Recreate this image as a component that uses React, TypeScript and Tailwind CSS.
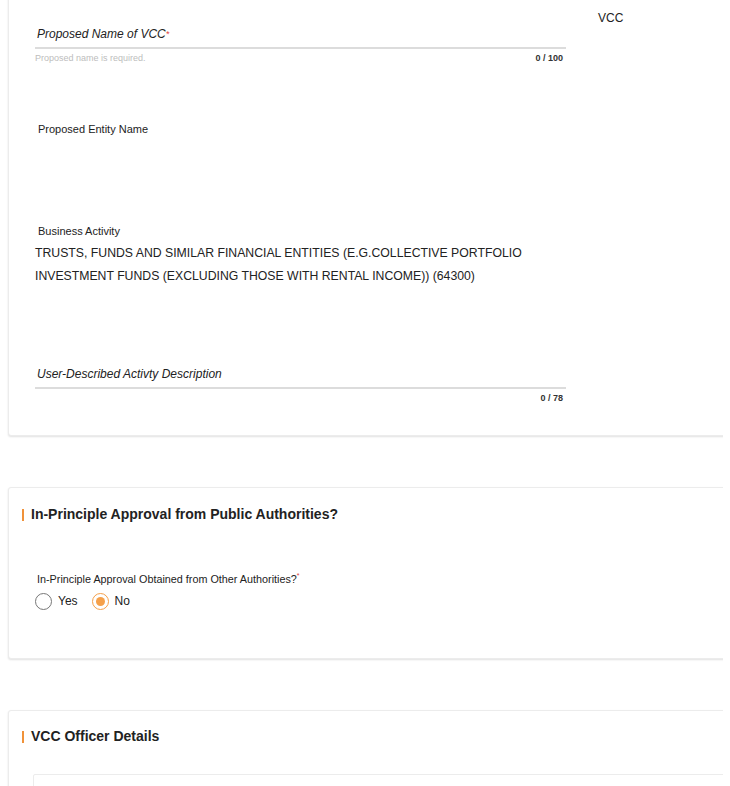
import React, { useState } from 'react';

const Card: React.FC<{ className?: string; children: React.ReactNode }> = ({ className = '', children }) => (
    <div className={`w-[740px] bg-white border border-[#ececec] rounded-[3px] shadow-[0_1px_2px_rgba(0,0,0,0.12)] ${className}`}>
        {children}
    </div>
);

const SectionTitle: React.FC<{ title: string }> = ({ title }) => (
    <div className="flex items-center gap-[7px] pl-[13px]">
        <span className="w-[2px] h-[12px] bg-[#f0923a]" />
        <h2 className="text-[14px] font-bold text-[#222]">{title}</h2>
    </div>
);

const UnderlineField: React.FC<{ label: string; required?: boolean; hint?: string; count: string }> = ({ label, required, hint, count }) => (
    <div className="w-[531px]">
        <div className="pl-[2px] text-[12px] italic text-[#222] leading-[14px]">
            {label}
            {required && <span className="text-[#e03a3a] text-[9px] align-top">*</span>}
        </div>
        <div className="mt-[6px] h-[2px] bg-[#dcdcdc]" />
        <div className="flex justify-between mt-[4px] text-[9px] leading-[11px]">
            <span className="text-[#bdbdbd]">{hint}</span>
            <span className="font-bold text-[#333] pr-[3px]">{count}</span>
        </div>
    </div>
);

const Radio: React.FC<{ checked: boolean; label: string; onClick: () => void }> = ({ checked, label, onClick }) => (
    <button onClick={onClick} className="flex items-center gap-[6px] text-[12px] text-[#222]">
        <span className={`w-[17px] h-[17px] rounded-full border-[1.5px] flex items-center justify-center ${checked ? 'border-[#f5a04a]' : 'border-[#777]'}`}>
            {checked && <span className="w-[9px] h-[9px] rounded-full bg-[#f5a04a]" />}
        </span>
        {label}
    </button>
);

export default function App() {
    const [approval, setApproval] = useState<'yes' | 'no'>('no');

    return (
        <div className="w-[723px] h-[786px] overflow-hidden bg-white font-['Liberation_Sans',Arial,sans-serif] text-[#222]">
            <div className="pl-[8px]">
                {/* Company details (top cut off) */}
                <Card className="-mt-[10px] pt-[36px] pb-[31px] pl-[26px]">
                    <div className="flex">
                        <div className="flex flex-col">
                            <UnderlineField label="Proposed Name of VCC" required hint="Proposed name is required." count="0 / 100" />

                            <div className="mt-[57px] pl-[3px] text-[11px]">Proposed Entity Name</div>

                            <div className="mt-[85px] pl-[3px] text-[11px]">Business Activity</div>
                            <p className="mt-[3px] text-[12.25px] leading-[23px] w-[531px]">
                                TRUSTS, FUNDS AND SIMILAR FINANCIAL ENTITIES (E.G.COLLECTIVE PORTFOLIO INVESTMENT FUNDS (EXCLUDING THOSE WITH RENTAL INCOME)) (64300)
                            </p>

                            <div className="mt-[79px]">
                                <UnderlineField label="User-Described Activty Description" count="0 / 78" />
                            </div>
                        </div>
                        <div className="ml-[32px] -mt-[18px] text-[12px]">VCC</div>
                    </div>
                </Card>

                {/* In-principle approval */}
                <Card className="mt-[51px] pt-[16px] pb-[48px]">
                    <SectionTitle title="In-Principle Approval from Public Authorities?" />
                    <div className="mt-[46px] pl-[28px] text-[10.8px]">
                        In-Principle Approval Obtained from Other Authorities?
                        <span className="text-[#e03a3a] text-[7px] align-top">*</span>
                    </div>
                    <div className="mt-[5px] pl-[26px] flex items-center gap-[14px]">
                        <Radio checked={approval === 'yes'} label="Yes" onClick={() => setApproval('yes')} />
                        <Radio checked={approval === 'no'} label="No" onClick={() => setApproval('no')} />
                    </div>
                </Card>

                {/* Officer details */}
                <Card className="mt-[51px] pt-[15px] pb-[40px]">
                    <SectionTitle title="VCC Officer Details" />
                    <div className="mt-[27px] ml-[24px] h-[80px] border border-[#ececec] rounded-[2px]" />
                </Card>
            </div>
        </div>
    );
}
